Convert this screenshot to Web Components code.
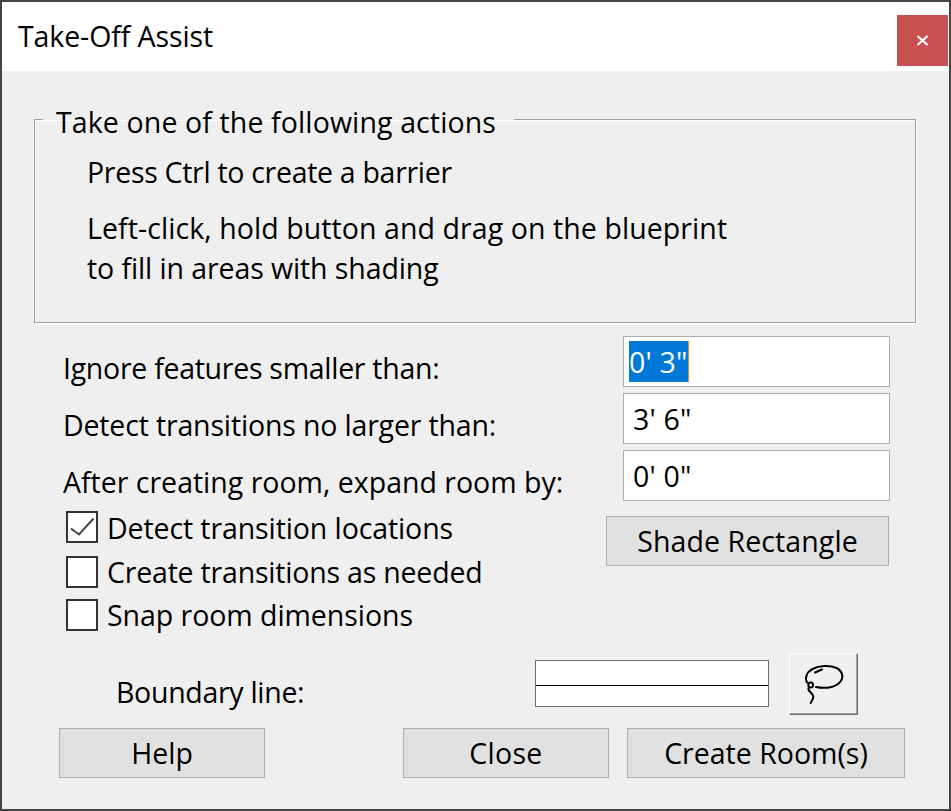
<!DOCTYPE html>
<html>
<head>
<meta charset="utf-8">
<title>Take-Off Assist</title>
<style>
	html, body { margin: 0; padding: 0; background: #efefef; }
	body { font-family: "Open Sans", "Noto Sans", sans-serif; font-size: 28.5px; color: #000; }
</style>
</head>
<body>
<takeoff-dialog heading="Take-Off Assist">
	<action-group legend="Take one of the following actions">
		<p style="letter-spacing:-.3px">Press Ctrl to create a barrier</p>
		<p style="letter-spacing:.08px">Left-click, hold button and drag on the blueprint<br><span style="letter-spacing:-.1px">to fill in areas with shading</span></p>
	</action-group>

	<measure-field label="Ignore features smaller than:" value="0' 3&quot;" selected style="--label-spacing:-.28px"></measure-field>
	<measure-field label="Detect transitions no larger than:" value="3' 6&quot;" style="--label-spacing:-.16px"></measure-field>
	<measure-field label="After creating room, expand room by:" value="0' 0&quot;"></measure-field>

	<options-row>
		<check-option checked style="letter-spacing:-.1px">Detect transition locations</check-option>
		<check-option style="letter-spacing:-.2px">Create transitions as needed</check-option>
		<check-option style="letter-spacing:-.05px">Snap room dimensions</check-option>
		<push-button slot="side" style="width:283px;letter-spacing:.1px">Shade Rectangle</push-button>
	</options-row>

	<boundary-row label="Boundary line:"></boundary-row>

	<footer-row>
		<push-button style="width:206px">Help</push-button>
		<push-button style="width:206px;margin-left:138px;letter-spacing:.3px">Close</push-button>
		<push-button style="width:278px;margin-left:18px">Create Room(s)</push-button>
	</footer-row>
</takeoff-dialog>

<script>
class TakeoffDialog extends HTMLElement {
	constructor() {
		super();
		this.attachShadow({ mode: "open" });
		this.shadowRoot.innerHTML = `
			<style>
				:host {
					display: block;
					box-sizing: border-box;
					width: 951px;
					height: 811px;
					border: 2px solid #444;
					background: #efefef;
				}
				.titlebar {
					display: flex;
					justify-content: space-between;
					height: 69px;
					background: #fff;
				}
				.heading {
					margin: 13px 0 0 16px;
					line-height: 42px;
					letter-spacing: -.1px;
				}
				.close {
					width: 51px;
					height: 51px;
					margin-top: 13px;
					margin-right: 1px;
					display: flex;
					align-items: center;
					justify-content: center;
					background: #c75050;
				}
				.content { padding: 25px 33px 0 32px; }
			</style>
			<div class="titlebar">
				<div class="heading"></div>
				<div class="close">
					<svg width="13" height="11" viewBox="0 0 13 11">
						<path d="M1.5 1 L11.5 10 M11.5 1 L1.5 10" stroke="#fff" stroke-width="2.2" fill="none"/>
					</svg>
				</div>
			</div>
			<div class="content"><slot></slot></div>
		`;
		this.shadowRoot.querySelector(".heading").textContent = this.getAttribute("heading");
	}
}

class ActionGroup extends HTMLElement {
	constructor() {
		super();
		this.attachShadow({ mode: "open" });
		this.shadowRoot.innerHTML = `
			<style>
				:host { display: block; margin-bottom: 13px; }
				fieldset {
					box-sizing: border-box;
					height: 227px;
					margin: 0;
					padding: 10px 0 0;
					border: 1px solid #a0a0a0;
					box-shadow: 1px 1px 0 #fff, inset 1px 1px 0 #fff;
				}
				legend {
					margin-left: 8px;
					padding: 6px 18px 0 13px;
					line-height: 40px;
					letter-spacing: .12px;
				}
				::slotted(p) { margin: 0 0 16px; padding-left: 52px; line-height: 40px; }
			</style>
			<fieldset>
				<legend></legend>
				<slot></slot>
			</fieldset>
		`;
		this.shadowRoot.querySelector("legend").textContent = this.getAttribute("legend");
	}
}

class MeasureField extends HTMLElement {
	constructor() {
		super();
		this.attachShadow({ mode: "open" });
		this.shadowRoot.innerHTML = `
			<style>
				:host {
					display: flex;
					align-items: center;
					justify-content: space-between;
					height: 51px;
					margin-bottom: 6px;
					padding: 0 26px 0 29px;
				}
				.label { padding-top: 12px; letter-spacing: var(--label-spacing, 0); }
				.box {
					box-sizing: border-box;
					width: 267px;
					height: 51px;
					padding: 3px 5px;
					display: flex;
					align-items: center;
					border: 1px solid #adadad;
					background: #fff;
				}
				.value { padding: 2px 3px 0 4px; line-height: 39px; white-space: pre; letter-spacing: .2px; }
				.selected .value {
					padding: 2px 0 0;
					background: #0078d7;
					color: #fff;
					border-right: 1px solid #f7861c;
				}
			</style>
			<div class="label"></div>
			<div class="box"><span class="value"></span></div>
		`;
		this.shadowRoot.querySelector(".label").textContent = this.getAttribute("label");
		this.shadowRoot.querySelector(".value").textContent = this.getAttribute("value");
		this.shadowRoot.querySelector(".box").classList.toggle("selected", this.hasAttribute("selected"));
	}
}

class OptionsRow extends HTMLElement {
	constructor() {
		super();
		this.attachShadow({ mode: "open" });
		this.shadowRoot.innerHTML = `
			<style>
				:host {
					display: flex;
					justify-content: space-between;
					align-items: flex-start;
					padding: 4px 27px 0 32px;
				}
				.checks { display: flex; flex-direction: column; gap: 12px; }
				.side { padding-top: 5px; }
				::slotted(check-option:first-child) { margin-bottom: 1px; }
				::slotted(check-option:nth-child(2)) { margin-bottom: -1px; }
			</style>
			<div class="checks"><slot></slot></div>
			<div class="side"><slot name="side"></slot></div>
		`;
	}
}

class CheckOption extends HTMLElement {
	constructor() {
		super();
		this.attachShadow({ mode: "open" });
		this.shadowRoot.innerHTML = `
			<style>
				:host {
					display: flex;
					align-items: center;
					gap: 9px;
					height: 32px;
				}
				:host([checked]) span { padding-top: 2px; }
				.box {
					box-sizing: border-box;
					width: 32px;
					height: 32px;
					border: 2px solid #333;
					background: #fff;
				}
				svg { display: block; }
			</style>
			<div class="box"></div>
			<span><slot></slot></span>
		`;
		if (this.hasAttribute("checked")) {
			this.shadowRoot.querySelector(".box").innerHTML = `
				<svg width="28" height="28" viewBox="0 0 28 28">
					<path d="M3 15.5 L11 21.5 L25.5 5.5" fill="none" stroke="#444" stroke-width="2"/>
				</svg>`;
		}
	}
}

class PushButton extends HTMLElement {
	constructor() {
		super();
		this.attachShadow({ mode: "open" });
		this.shadowRoot.innerHTML = `
			<style>
				:host {
					display: flex;
					box-sizing: border-box;
					height: 50px;
					align-items: center;
					justify-content: center;
					border: 1px solid #adadad;
					background: #e1e1e1;
				}
			</style>
			<slot></slot>
		`;
	}
}

class BoundaryRow extends HTMLElement {
	constructor() {
		super();
		this.attachShadow({ mode: "open" });
		this.shadowRoot.innerHTML = `
			<style>
				:host {
					display: flex;
					align-items: flex-start;
					height: 62px;
					margin-top: 22px;
					padding-left: 82px;
				}
				.label { width: 419px; padding-top: 20px; letter-spacing: -.3px; }
				.line {
					box-sizing: border-box;
					width: 234px;
					height: 47px;
					margin: 7px 20px 0 0;
					border: 1px solid #6d6d6d;
					background: #fff;
				}
				.line i { display: block; height: 1px; margin-top: 24px; background: #000; }
				.lasso {
					box-sizing: border-box;
					width: 69px;
					height: 62px;
					border: 1px solid;
					border-color: #fff #6d6d6d #6d6d6d #fff;
					box-shadow: inset -1px -1px 0 #a0a0a0;
					background: #f0f0f0;
				}
				svg { display: block; margin: -1px; }
			</style>
			<div class="label"></div>
			<div class="line"><i></i></div>
			<div class="lasso">
				<svg width="69" height="62" viewBox="0 0 69 62" fill="none" stroke="#000" stroke-width="2" stroke-linecap="round">
					<path d="M18 29.5 C15.5 24 18 19 23.5 16 C30 12.5 41 12 47.5 15 C53.5 18 55 24 51.5 28.5 C47 34.5 37 36 27 34"/>
					<path d="M26 19.5 L33 16.5"/>
					<circle cx="21.7" cy="32" r="2.4"/>
					<path d="M19.5 35 C18.5 38.5 24 40 24.3 43.5 C24.5 46 22.5 48 21.7 50"/>
				</svg>
			</div>
		`;
		this.shadowRoot.querySelector(".label").textContent = this.getAttribute("label");
	}
}

class FooterRow extends HTMLElement {
	constructor() {
		super();
		this.attachShadow({ mode: "open" });
		this.shadowRoot.innerHTML = `
			<style>
				:host { display: flex; margin-top: 13px; padding-left: 25px; }
			</style>
			<slot></slot>
		`;
	}
}

customElements.define("takeoff-dialog", TakeoffDialog);
customElements.define("action-group", ActionGroup);
customElements.define("measure-field", MeasureField);
customElements.define("options-row", OptionsRow);
customElements.define("check-option", CheckOption);
customElements.define("push-button", PushButton);
customElements.define("boundary-row", BoundaryRow);
customElements.define("footer-row", FooterRow);
</script>
</body>
</html>
